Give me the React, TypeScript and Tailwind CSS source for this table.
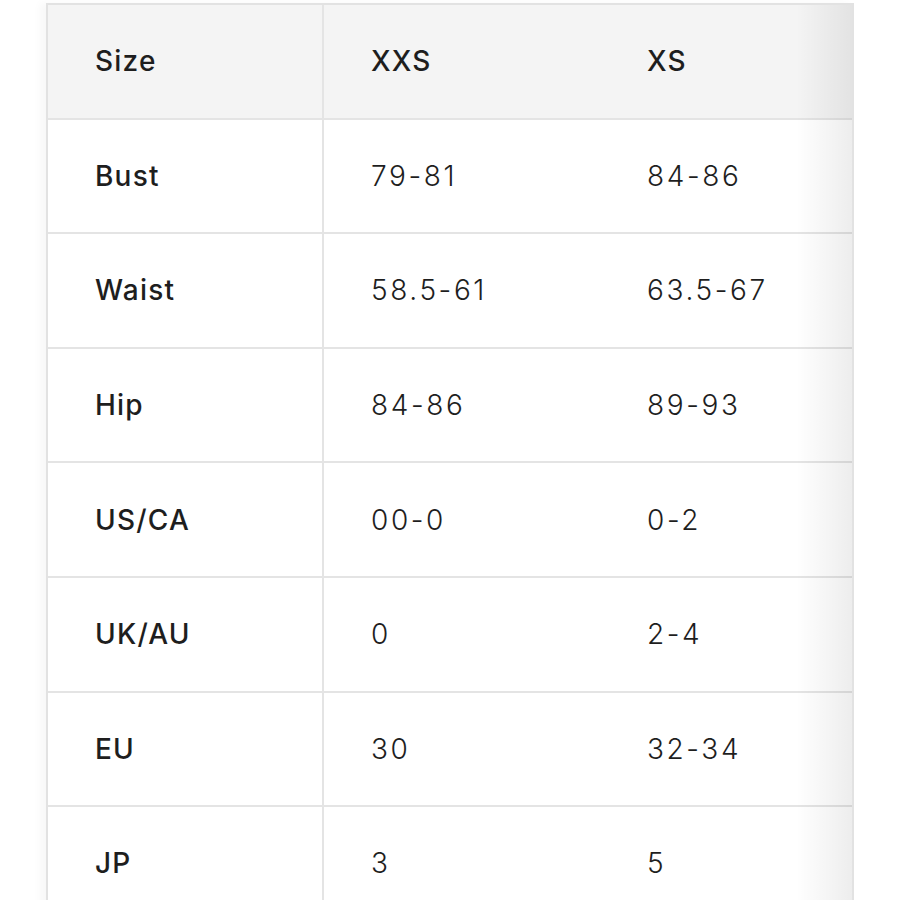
const rows: string[][] = [
  ["Bust", "79-81", "84-86"],
  ["Waist", "58.5-61", "63.5-67"],
  ["Hip", "84-86", "89-93"],
  ["US/CA", "00-0", "0-2"],
  ["UK/AU", "0", "2-4"],
  ["EU", "30", "32-34"],
  ["JP", "3", "5"],
];

const header = ["Size", "XXS", "XS"];

function Cell({ text, head, col }: { text: string; head?: boolean; col: number }) {
  const width =
    col === 0 ? "w-[276px] shrink-0 border-r-2" : col === 1 ? "w-[276px] shrink-0" : "flex-1";
  return (
    <div
      className={`h-[114.6px] flex items-center pl-[47px] border-b-2 border-[#e4e4e4] text-[28px] text-[#1e1e1e] ${width} ${
        head ? "bg-[#f4f4f4]" : "bg-white"
      } ${col === 0 || head ? "font-medium tracking-[1.2px]" : "font-light tracking-[2.6px]"}`}
    >
      {text}
    </div>
  );
}

export default function App() {
  return (
    <div
      className="w-[900px] h-[900px] bg-white overflow-hidden pt-[3px] pl-[46px]"
      style={{ fontFamily: "Inter, 'Open Sans', sans-serif" }}
    >
      <div className="relative w-[808px] border-l-2 border-t-2 border-r-2 border-[#e2e2e2] overflow-hidden shadow-[-6px_0_8px_rgba(0,0,0,0.03)]">
        <div className="flex">
          {header.map((h, i) => (
            <Cell key={h} text={h} head col={i} />
          ))}
        </div>
        {rows.map((r) => (
          <div key={r[0]} className="flex">
            {r.map((v, i) => (
              <Cell key={i} text={v} col={i} />
            ))}
          </div>
        ))}
        <div className="absolute top-0 right-0 w-[56px] h-full bg-gradient-to-r from-transparent to-[rgba(0,0,0,0.07)]" />
      </div>
    </div>
  );
}
